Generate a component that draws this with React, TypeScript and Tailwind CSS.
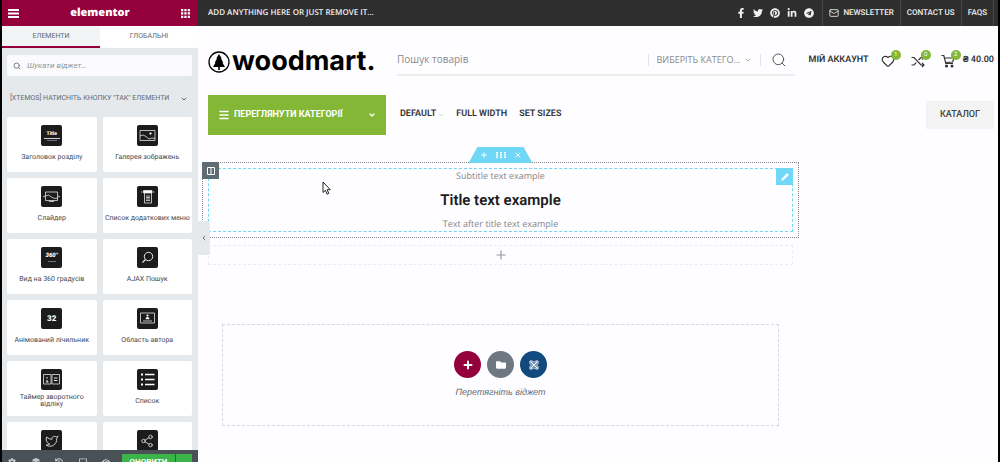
import React, { useState } from 'react';
import {
  FaFacebookF,
  FaTwitter,
  FaPinterest,
  FaLinkedinIn,
  FaTelegram,
  FaFolder,
  FaCog,
  FaLayerGroup,
  FaHistory,
  FaDesktop,
  FaEye,
} from 'react-icons/fa';
import { Search, ChevronDown, ChevronLeft, Heart, Plus, X, Pencil, Menu, Mail, Twitter, Share2 } from 'lucide-react';

const TileIcon: React.FC<{ children: React.ReactNode }> = ({ children }) => (
  <svg viewBox="0 0 21 21" className="w-full h-full" fill="none" stroke="#e5e5e5" strokeWidth="0.8">
    {children}
  </svg>
);

const widgets = [
  {
    id: 'title',
    label: 'Заголовок розділу',
    icon: (
      <>
        <span className="text-[5px] leading-[6px] font-black text-white">Title</span>
        <span className="w-4 h-px bg-gray-300 mt-px" />
        <span className="w-2.5 h-px bg-gray-500 mt-px" />
      </>
    ),
  },
  {
    id: 'gallery',
    label: 'Галерея зображень',
    icon: (
      <TileIcon>
        <path d="M3 5.500h15v10H3z M3 11l3-1 3 1.500 3 2.500 3-1 3 .5" />
        <circle cx="13.500" cy="8.500" r="0.800" fill="#fff" />
      </TileIcon>
    ),
  },
  {
    id: 'slider',
    label: 'Слайдер',
    icon: (
      <TileIcon>
        <path d="M4.500 6h12v8.500h-12z M4.500 10l3-1 3 2 3 1.500 3-.5 M8 15.500h5" />
        <path d="M3.500 9.500L2 10.500l1.500 1z M17.500 9.500l1.500 1-1.500 1z" fill="#fff" stroke="none" />
      </TileIcon>
    ),
  },
  {
    id: 'menu',
    label: 'Список додаткових меню',
    icon: (
      <TileIcon>
        <path d="M6.500 4.500h8.500v2.500H6.500z" fill="#fff" />
        <path d="M7.500 7v10h7V7 M9 10h4 M9 11.500h4 M9 13h4 M9 14.500h4 M4 6h1.500 M16 6h1.500" />
      </TileIcon>
    ),
  },
  {
    id: 'view360',
    label: 'Вид на 360 градусів',
    icon: (
      <>
        <span className="text-[6px] leading-[6px] font-black italic text-white">360°</span>
        <span className="w-2 h-px bg-gray-500 mt-0.5" />
      </>
    ),
  },
  {
    id: 'ajax',
    label: 'AJAX Пошук',
    icon: (
      <TileIcon>
        <circle cx="11.500" cy="9.500" r="4.200" strokeWidth="1" />
        <path d="M8.500 12.500L5.500 15.500" strokeWidth="1.200" />
      </TileIcon>
    ),
  },
  {
    id: 'counter',
    label: 'Анімований лічильник',
    icon: <span className="text-[8px] leading-[10px] font-black text-white">32</span>,
  },
  {
    id: 'author',
    label: 'Область автора',
    icon: (
      <TileIcon>
        <path d="M3.500 5h14v10h-14z M6 13h9" />
        <circle cx="10.500" cy="7.500" r="1.100" fill="#fff" stroke="none" />
        <path d="M8.500 11.200c0-3 4-3 4 0z" fill="#fff" stroke="none" />
      </TileIcon>
    ),
  },
  {
    id: 'countdown',
    label: 'Таймер зворотного відліку',
    icon: (
      <TileIcon>
        <path d="M2.500 5.500h7.500v9.500H2.500z M11 5.500h7.500v9.500H11z" />
        <path d="M6 8v1.500 M6 11v1.500 M5 13h2.500 M13 9h3.500 M13 11.500h3.500" strokeWidth="1.200" />
      </TileIcon>
    ),
  },
  {
    id: 'list',
    label: 'Список',
    icon: (
      <TileIcon>
        <path d="M8 5.500h9.500 M8 10.500h9.500 M8 15.500h9.500" strokeWidth="1.300" stroke="#fff" />
        <path d="M4 5.500h2 M4 10.500h2 M4 15.500h2" strokeWidth="2.200" stroke="#fff" />
      </TileIcon>
    ),
  },
  { id: 'twitter', icon: <Twitter className="size-3.5 text-gray-200" strokeWidth={1.5} /> },
  { id: 'share', icon: <Share2 className="size-3.5 text-gray-300" strokeWidth={1.5} /> },
];

const Sidebar: React.FC = () => {
  const [tab, setTab] = useState('elements');

  const tabs = [
    { id: 'elements', label: 'ЕЛЕМЕНТИ' },
    { id: 'global', label: 'ГЛОБАЛЬНІ' },
  ];

  return (
    <aside className="w-[196px] shrink-0 flex flex-col bg-[#e6e9ec] text-[#5f6a73]">
      <header className="h-[26px] shrink-0 bg-[#93003c] text-white flex items-center justify-between px-1.5">
        <button aria-label="Menu">
          <svg viewBox="0 0 11 9" className="w-[11px] h-[9px]" fill="currentColor">
            <path d="M0 0h11v2H0z M0 3.500h11v2H0z M0 7h11v2H0z" />
          </svg>
        </button>
        <span className="text-[11px] leading-4 font-extrabold font-['Open_Sans',sans-serif]">elementor</span>
        <button aria-label="Widgets" className="mr-0.5">
          <svg viewBox="0 0 9 9" className="size-[9px]" fill="currentColor">
            <path d="M0 0h2.300v2.300H0z M3.300 0h2.300v2.300H3.300z M6.700 0H9v2.300H6.700z M0 3.300h2.300v2.300H0z M3.300 3.300h2.300v2.300H3.300z M6.700 3.300H9v2.300H6.700z M0 6.700h2.300V9H0z M3.300 6.700h2.300V9H3.300z M6.700 6.700H9V9H6.700z" />
          </svg>
        </button>
      </header>

      <nav className="h-[22px] shrink-0 flex text-[7px]">
        {tabs.map((t) => (
          <button
            key={t.id}
            onClick={() => setTab(t.id)}
            className={`flex-1 border-b-2 ${
              tab === t.id ? 'bg-[#f1f3f5] border-[#93003c]' : 'bg-white border-white'
            }`}
          >
            {t.label}
          </button>
        ))}
      </nav>

      <div className="flex-1 min-h-0 overflow-hidden pl-[5px] pr-1.5 pt-[7px]">
        <label className="h-[21px] flex items-center gap-1.5 bg-[#fbfbfd] rounded-xs px-1.5">
          <Search className="size-2 shrink-0" strokeWidth={2.5} />
          <input
            type="search"
            placeholder="Шукати віджет…"
            className="min-w-0 flex-1 text-[8px] italic outline-none placeholder-[#8f979f]"
          />
        </label>

        <button className="w-full h-[41px] flex items-center justify-between pl-[3px] pr-1 pt-1 text-[7px] whitespace-nowrap">
          [XTEMOS] НАТИСНІТЬ КНОПКУ "ТАК" ЕЛЕМЕНТИ
          <ChevronDown className="size-2 shrink-0" strokeWidth={3} />
        </button>

        <div className="grid grid-cols-2 gap-1.5">
          {widgets.map((w) => (
            <div key={w.id} className="h-[55px] bg-white rounded-xs flex flex-col items-center pt-2">
              <div className="size-[21px] shrink-0 rounded-xs bg-[#1c1c1c] flex flex-col items-center justify-center">
                {w.icon}
              </div>
              {w.label && (
                <div className="h-[22px] flex items-center text-center text-[7px] leading-[7px] text-[#3f4a52]">
                  <span className="max-w-[88px]">{w.label}</span>
                </div>
              )}
            </div>
          ))}
        </div>
      </div>

      <footer className="h-3 shrink-0 overflow-hidden bg-[#495157] text-[#c2cbd2] flex items-start justify-between pl-1.5 pr-1.5">
        <div className="flex flex-1 justify-between pt-2 pr-3">
          <FaCog className="size-2" />
          <FaLayerGroup className="size-2" />
          <FaHistory className="size-2" />
          <FaDesktop className="size-2" />
          <FaEye className="size-2" />
        </div>
        <div className="mt-1 flex gap-px text-white">
          <button className="w-[53px] h-4 bg-[#39b54a] text-[8px] leading-4 font-bold">ОНОВИТИ</button>
          <button aria-label="Save options" className="w-4 h-4 bg-[#39b54a]" />
        </div>
      </footer>
    </aside>
  );
};

const TopBar: React.FC = () => {
  const socials = [
    { name: 'Facebook', icon: FaFacebookF },
    { name: 'Twitter', icon: FaTwitter },
    { name: 'Pinterest', icon: FaPinterest },
    { name: 'Linkedin', icon: FaLinkedinIn },
    { name: 'Telegram', icon: FaTelegram },
  ];

  return (
    <div className="h-[26px] bg-[#2e2e2e] text-[#f0f0f0] flex items-center pl-2.5 pr-1">
      <span className="text-[8px] font-semibold font-['Open_Sans',sans-serif]">ADD ANYTHING HERE OR JUST REMOVE IT…</span>
      <div className="ml-auto flex items-center gap-[7px] pr-2">
        {socials.map(({ name, icon: Icon }) => (
          <a key={name} href="#" aria-label={name}>
            <Icon className="size-[10px]" />
          </a>
        ))}
      </div>
      <nav className="self-stretch flex text-[8px] font-medium border-r border-[#484848]">
        <a href="#" className="flex items-center gap-1 px-1.5 border-l border-[#484848]">
          <Mail className="size-2.5" />
          NEWSLETTER
        </a>
        <a href="#" className="flex items-center px-1.5 border-l border-[#484848]">CONTACT US</a>
        <a href="#" className="flex items-center px-1.5 border-l border-[#484848]">FAQS</a>
      </nav>
    </div>
  );
};

const Badge: React.FC<{ count: number }> = ({ count }) => (
  <span className="absolute -top-1 -right-1.5 size-2.5 rounded-full bg-[#83b735] text-white text-[6px] leading-[10px] text-center">
    {count}
  </span>
);

const ShopHeader: React.FC = () => {
  return (
    <div className="h-[69px] flex items-center pl-2.5 pr-1">
      <a href="#" className="w-[189px] shrink-0 flex items-center text-black">
        <svg viewBox="0 0 22 22" className="size-[22px] mt-0.5">
          <circle cx="11" cy="11" r="10" fill="none" stroke="currentColor" strokeWidth="1.300" />
          <path d="M11 3l2.800 4.500h-.9l2.400 4h-.9l2.600 4.500h-5.200v3h-1.600v-3H5l2.600-4.500h-.9l2.400-4h-.9z" fill="currentColor" />
        </svg>
        <span className="ml-0.5 text-[27px] leading-8 font-bold font-['Inter',sans-serif]">woodmart.</span>
      </a>

      <form className="flex-1 h-[30px] flex items-center border-b-2 border-[#ececec] font-['Open_Sans',sans-serif] text-[#8a8a8a]">
        <input
          type="text"
          aria-label="Пошук товарів"
          placeholder="Пошук товарів"
          className="min-w-0 flex-1 text-[10px] outline-none placeholder-[#8a8a8a]"
        />
        <div className="relative flex items-center border-x border-[#e4e4e4] h-3 w-[113px]">
          <select aria-label="Категорія" className="w-full appearance-none pl-2 text-[9px] leading-3 outline-none">
            <option>ВИБЕРІТЬ КАТЕГО…</option>
          </select>
          <ChevronDown className="absolute right-2 size-2 pointer-events-none" />
        </div>
        <button type="button" aria-label="Шукати" className="pl-2.5 pr-2 text-[#555]">
          <Search className="size-4" strokeWidth={1.5} />
        </button>
      </form>

      <div className="ml-3.5 flex items-center text-[#333]">
        <a href="#" className="text-[9px] font-semibold">МІЙ АККАУНТ</a>
        <a href="#" aria-label="Wishlist" className="relative ml-3">
          <Heart className="size-3.5" />
          <Badge count={1} />
        </a>
        <a href="#" aria-label="Compare" className="relative ml-4">
          <svg viewBox="0 0 14 14" className="size-3.5" fill="none" stroke="currentColor" strokeWidth="1.200">
            <path d="M0.500 3.500H3L10 11h3 M11 9l2 2-2 2 M0.500 11H3l2.200-2.400 M7.500 6L10 3.500h3 M11 1.500l2 2-2 2" />
          </svg>
          <Badge count={0} />
        </a>
        <a href="#" aria-label="Cart" className="relative ml-4">
          <svg viewBox="0 0 14 14" className="size-3.5" fill="none" stroke="currentColor" strokeWidth="1.200">
            <path d="M0.500 1.500h2.300l2 8h7.200 M3.500 4h9.500l-1.300 4L4.500 8.500" />
            <circle cx="5.500" cy="12" r="0.900" fill="currentColor" />
            <circle cx="11" cy="12" r="0.900" fill="currentColor" />
          </svg>
          <Badge count={2} />
        </a>
        <span className="ml-2 text-[9px] font-semibold whitespace-nowrap">₴ 40.00</span>
      </div>
    </div>
  );
};

const MainNav: React.FC = () => {
  return (
    <div className="flex items-center pl-2.5 pr-1 text-[#333]">
      <button className="w-[178px] h-10 bg-[#83b735] text-white flex items-center px-2.5 gap-1">
        <Menu className="size-3" strokeWidth={3} />
        <span className="text-[9px] font-bold">ПЕРЕГЛЯНУТИ КАТЕГОРІЇ</span>
        <ChevronDown className="ml-auto size-2" strokeWidth={4} />
      </button>
      <nav className="ml-3.5 flex items-center gap-3 text-[9px] font-semibold">
        <a href="#" className="flex items-center gap-0.5">
          DEFAULT
          <ChevronDown className="size-1.5 text-gray-400" />
        </a>
        <a href="#">FULL WIDTH</a>
        <a href="#">SET SIZES</a>
      </nav>
      <button className="ml-auto w-[68px] h-7 bg-[#f3f3f3] text-[9px] font-medium text-[#444]">КАТАЛОГ</button>
    </div>
  );
};

const Canvas: React.FC = () => {
  return (
    <div className="relative pl-1 pr-[199px] pt-[27px]">
      {/* Selected section */}
      <section className="relative border border-dotted border-[#888] p-[5px]">
        <div className="absolute -top-4 left-1/2 -translate-x-1/2 w-16 h-4 bg-[#71d7f7] text-white flex items-center justify-center gap-2 [clip-path:polygon(14%_0,86%_0,100%_100%,0_100%)]">
          <button aria-label="Add section"><Plus className="size-2" strokeWidth={3} /></button>
          <button aria-label="Edit section">
            <svg viewBox="0 0 10 6" className="w-2.5 h-1.5" fill="currentColor">
              <path d="M0 0h2v1.500H0z M4 0h2v1.500H4z M8 0h2v1.500H8z M0 2.300h2v1.500H0z M4 2.300h2v1.500H4z M8 2.300h2v1.500H8z M0 4.500h2V6H0z M4 4.500h2V6H4z M8 4.500h2V6H8z" />
            </svg>
          </button>
          <button aria-label="Delete section"><X className="size-2" strokeWidth={3} /></button>
        </div>

        {/* Title widget */}
        <div className="relative h-16 border border-dashed border-[#71d7f7] flex flex-col items-center justify-between text-[9px] leading-[14px] text-[#858585] font-['Open_Sans',sans-serif]">
          <p>Subtitle text example</p>
          <h2 className="text-[15px] leading-5 font-semibold text-[#1c1c1c] font-['Roboto',sans-serif]">Title text example</h2>
          <p>Text after title text example</p>
          <button aria-label="Edit widget" className="absolute -top-px -right-px size-[17px] bg-[#71d7f7] text-white flex items-center justify-center">
            <Pencil className="size-2" fill="currentColor" />
          </button>
        </div>
        <button aria-label="Edit column" className="absolute -top-px -left-px size-[17px] bg-[#5f6a73] text-white flex items-center justify-center">
          <svg viewBox="0 0 8 8" className="size-2" fill="none" stroke="currentColor">
            <path d="M0.500 0.500h7v7h-7z M4 0.500v7" />
          </svg>
        </button>
        <svg viewBox="0 0 9 14" className="absolute left-[119px] top-[18px] w-[9px] h-3.5">
          <path d="M1 1v10.500l2.400-2.200 1.700 3.900 1.700-.8-1.700-3.700H8.300z" fill="#fff" stroke="#222" strokeWidth="1" />
        </svg>
      </section>

      <button aria-label="Add widget" className="mt-[7px] mx-1.5 h-5 flex items-center justify-center border border-dashed border-[#ececf0] text-[#999] w-[calc(100%-12px)]">
        <Plus className="size-3.5" />
      </button>

      {/* Drop area */}
      <div className="mt-[59px] mx-5 h-[102px] flex flex-col items-center border border-dashed border-[#d5d8dc] pt-[26px]">
        <div className="flex gap-1.5 text-white">
          <button aria-label="Add new section" className="size-[27px] rounded-full bg-[#93003c] flex items-center justify-center">
            <Plus className="size-3" strokeWidth={4} />
          </button>
          <button aria-label="Add template" className="size-[27px] rounded-full bg-[#6f7882] flex items-center justify-center">
            <FaFolder className="size-2.5" />
          </button>
          <button aria-label="Theme library" className="size-[27px] rounded-full bg-[#124a80] flex items-center justify-center">
            <svg viewBox="0 0 10 10" className="size-2.5" fill="none" stroke="currentColor" strokeWidth="1.300">
              <path d="M2 2l6 6 M8 2L2 8" />
              <path d="M1 3.500V1h2.500L5 2.500 6.500 1H9v2.500L7.500 5 9 6.500V9H6.500L5 7.500 3.500 9H1V6.500L2.500 5z" strokeWidth="1" />
            </svg>
          </button>
        </div>
        <p className="mt-2 text-[9px] leading-3 italic text-[#5f6a73] font-['Liberation_Sans',sans-serif]">Перетягніть віджет</p>
      </div>

      <button aria-label="Hide panel" className="absolute left-0 top-[86px] w-3 h-[34px] bg-[#e6e9ec] text-[#6d7882] rounded-r-xs flex items-center justify-center">
        <ChevronLeft className="size-2" strokeWidth={3} />
      </button>
    </div>
  );
};

export default function App() {
  return (
    <div className="h-screen overflow-hidden flex bg-[#fefdff] border-x-2 border-black font-['Roboto',sans-serif] [text-rendering:geometricPrecision]">
      <Sidebar />
      <main className="flex-1 min-w-0">
        <TopBar />
        <ShopHeader />
        <MainNav />
        <Canvas />
      </main>
    </div>
  );
}
